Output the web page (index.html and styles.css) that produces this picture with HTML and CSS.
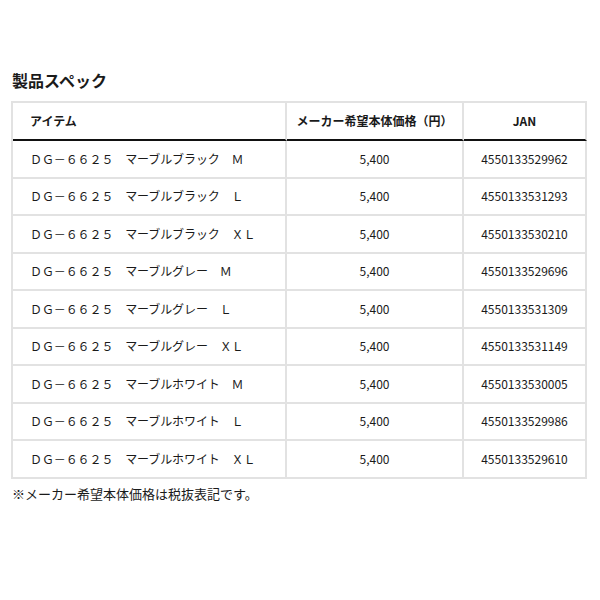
FILE: index.html
```html
<!DOCTYPE html>
<html lang="ja">
<head>
<meta charset="utf-8">
<title>製品スペック</title>
<link rel="stylesheet" href="styles.css">
</head>
<body>
<div class="page">
  <h2 class="title">製品スペック</h2>
  <table class="spec">
    <thead>
      <tr>
        <th class="c-item">アイテム</th>
        <th class="c-price">メーカー希望本体価格（円）</th>
        <th class="c-jan">JAN</th>
      </tr>
    </thead>
    <tbody>
      <tr><td class="c-item">ＤＧ－６６２５　マーブルブラック　Ｍ</td><td class="c-price">5,400</td><td class="c-jan">4550133529962</td></tr>
      <tr><td class="c-item">ＤＧ－６６２５　マーブルブラック　Ｌ</td><td class="c-price">5,400</td><td class="c-jan">4550133531293</td></tr>
      <tr><td class="c-item">ＤＧ－６６２５　マーブルブラック　ＸＬ</td><td class="c-price">5,400</td><td class="c-jan">4550133530210</td></tr>
      <tr><td class="c-item">ＤＧ－６６２５　マーブルグレー　Ｍ</td><td class="c-price">5,400</td><td class="c-jan">4550133529696</td></tr>
      <tr><td class="c-item">ＤＧ－６６２５　マーブルグレー　Ｌ</td><td class="c-price">5,400</td><td class="c-jan">4550133531309</td></tr>
      <tr><td class="c-item">ＤＧ－６６２５　マーブルグレー　ＸＬ</td><td class="c-price">5,400</td><td class="c-jan">4550133531149</td></tr>
      <tr><td class="c-item">ＤＧ－６６２５　マーブルホワイト　Ｍ</td><td class="c-price">5,400</td><td class="c-jan">4550133530005</td></tr>
      <tr><td class="c-item">ＤＧ－６６２５　マーブルホワイト　Ｌ</td><td class="c-price">5,400</td><td class="c-jan">4550133529986</td></tr>
      <tr><td class="c-item">ＤＧ－６６２５　マーブルホワイト　ＸＬ</td><td class="c-price">5,400</td><td class="c-jan">4550133529610</td></tr>
    </tbody>
  </table>
  <p class="note">※メーカー希望本体価格は税抜表記です。</p>
</div>
</body>
</html>
```

FILE: styles.css
```css
html, body {
  margin: 0;
  padding: 0;
  background: #fff;
}

body {
  font-family: "Noto Sans CJK JP", "Noto Sans", sans-serif;
  color: #1a1a1a;
}

.page {
  padding: 68px 13px 0 11px;
}

.title {
  margin: 0 0 9px 1px;
  font-size: 16px;
  line-height: 24px;
  font-weight: bold;
  color: #1a1a1a;
}

.spec {
  border-collapse: separate;
  border-spacing: 0;
  border-top: 2px solid #e2e2e2;
  border-left: 2px solid #e2e2e2;
  table-layout: fixed;
  width: 576px;
}

.spec th,
.spec td {
  box-sizing: border-box;
  border-right: 2px solid #e2e2e2;
  border-bottom: 2px solid #e2e2e2;
  padding: 0;
  font-size: 12px;
  line-height: 16px;
  vertical-align: middle;
  color: #1a1a1a;
}

.spec th {
  height: 38px;
  font-weight: bold;
  border-bottom: 2px solid #111;
}

.spec td {
  height: 37.5px;
}

.spec .c-item {
  width: 274px;
  text-align: left;
  padding-left: 17px;
}

.spec .c-price {
  width: 177px;
  text-align: center;
}

.spec .c-jan {
  width: 123px;
  text-align: center;
}

.spec td.c-item {
  padding-left: 17px;
  letter-spacing: -0.1px;
}

.note {
  margin: 5px 0 0 1px;
  font-size: 13px;
  line-height: 20px;
  color: #1a1a1a;
}
```
